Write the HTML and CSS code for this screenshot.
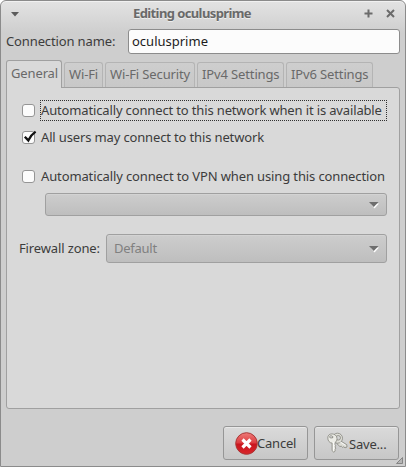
FILE: index.html
```html
<!DOCTYPE html>
<html lang="en">
<head>
<meta charset="utf-8">
<title>Editing oculusprime</title>
<link rel="stylesheet" href="styles.css">
</head>
<body>
<div class="window">
  <header class="titlebar">
    <svg class="menu-icon" width="8" height="5" viewBox="0 0 8 5"><path d="M0 0h8L4 4.5z" fill="#5c5c5c"/></svg>
    <h1 class="title">Editing oculusprime</h1>
    <div class="controls">
      <svg width="9" height="9" viewBox="0 0 9 9"><path d="M.5 4.5h8M4.5.5v8" stroke="#6b6b6b" stroke-width="2"/></svg>
      <svg width="9" height="9" viewBox="0 0 9 9"><path d="M1 1l7 7M8 1L1 8" stroke="#6b6b6b" stroke-width="2"/></svg>
    </div>
  </header>
  <div class="name-row">
    <label class="name-label" for="name">Connection name:</label>
    <input class="name-input" id="name" value="oculusprime">
  </div>
  <nav class="tabs">
    <div class="tab active">General</div>
    <div class="tab wifi">Wi-Fi</div>
    <div class="tab security">Wi-Fi Security</div>
    <div class="tab ip">IPv4 Settings</div>
    <div class="tab ip">IPv6 Settings</div>
  </nav>
  <main class="panel">
    <div class="check-row first"><span class="box"></span><span class="check-label focused">Automatically connect to this network when it is available</span></div>
    <div class="check-row second"><span class="box"><svg class="tick" width="14" height="13" viewBox="0 0 14 13"><path d="M1.8 6.8L5.3 10.4Q7.8 5 12.6 1.6" fill="none" stroke="#111" stroke-width="2.3"/></svg></span><span class="check-label users">All users may connect to this network</span></div>
    <div class="check-row third"><span class="box"></span><span class="check-label vpn">Automatically connect to VPN when using this connection</span></div>
    <div class="combo vpn-combo"><span></span><svg width="10" height="7" viewBox="0 0 10 7"><path d="M1.500 1.500H10L5.500 6.500z" fill="#fff"/><path d="M0 0h9.500L4.750 5z" fill="#6e6e6e"/></svg></div>
    <div class="zone-row">
      <span class="zone-label">Firewall zone:</span>
      <div class="combo zone-combo"><span class="zone-value">Default</span><svg width="10" height="7" viewBox="0 0 10 7"><path d="M1.500 1.500H10L5.500 6.500z" fill="#fff"/><path d="M0 0h9.500L4.750 5z" fill="#6e6e6e"/></svg></div>
    </div>
  </main>
  <footer class="actions">
    <button class="button cancel"><svg width="23" height="23" viewBox="0 0 23 23"><defs><linearGradient id="red" x2="0" y2="1"><stop stop-color="#ee7b78"/><stop offset=".48" stop-color="#dc3c40"/><stop offset=".52" stop-color="#c9151e"/><stop offset="1" stop-color="#d9262b"/></linearGradient></defs><circle cx="11.500" cy="11.500" r="10.800" fill="url(#red)" stroke="#a93737"/><path d="M7.500 7.500l8 8M15.500 7.500l-8 8" stroke="#fff" stroke-width="3.200"/></svg><span class="cancel-text">Cancel</span></button>
    <button class="button save"><svg width="22" height="22" viewBox="0 0 22 22"><g stroke="#85857d" stroke-width=".8" stroke-linejoin="round"><path d="M13 8.500l6.800 4.200.2 2.300-2 .8-1.300-1-1 .7-1.400-1.300-1.400.3-3-2.800z" fill="#dcdcd5"/><path fill-rule="evenodd" d="M10.500 1.200a5 5 0 1 1 0 10 5 5 0 0 1 0-10zm.7 2.300a2.300 2.300 0 1 0 0 4.600 2.300 2.300 0 0 0 0-4.600z" fill="#e0e0d9"/><path fill-rule="evenodd" d="M.8 6C.8 3.300 2.500 1.900 5 1.900s5 1.800 5 4.600c0 2-.7 3.200-2 4.100v2.200l.8 1-.8 1.100.8 1.200-.7 1.200v1.900L6.800 20.200l-1.700-1.500v-7.600C2.500 11 .8 8.700.8 6zm1.700-.8c.2 1 3 1 3.500.2S4.800 3.700 4 3.700s-1.600.7-1.500 1.500z" fill="#ecece6"/></g><path d="M6.600 10v8.500M13 9.800l5.500 3.500" stroke="#fff" stroke-width=".8"/></svg><span class="save-text">Save...</span></button>
  </footer>
  <svg class="grip" width="7" height="7" viewBox="0 0 7 7"><path d="M6.500.5v6H.5z" fill="#b5b5b5" stroke="#858585"/></svg>
</div>
</body>
</html>
```
FILE: styles.css
```css
* { box-sizing: border-box; }
body {
  margin: 0;
  width: 406px;
  height: 467px;
  overflow: hidden;
  background: #fff;
  font: 13px/18px "Noto Sans", "Open Sans", sans-serif;
  letter-spacing: -0.13px;
  color: #3c3c3c;
}
svg { display: block; flex: none; }
.window {
  position: relative;
  height: 467px;
  padding: 0 5px;
  border: 1px solid #8b8b8b;
  border-radius: 6px 6px 0 0;
  background: linear-gradient(#e3e3e3, #cecece 32px);
  box-shadow: inset 0 1px #f1f1f1;
}
.titlebar {
  height: 28px;
  padding: 0 5px;
  display: flex;
  align-items: center;
  justify-content: space-between;
}
.title {
  margin: -4px 0 0 1px;
  font-size: 13px;
  line-height: 18px;
  font-weight: 700;
  letter-spacing: -0.6px;
  color: #696969;
  text-shadow: 0 1px #eee;
  white-space: nowrap;
}
.menu-icon { margin-top: -2px; }
.controls { display: flex; gap: 13px; margin-top: -3px; }
.name-row { display: flex; align-items: center; height: 25px; }
.name-label { width: 122px; padding-bottom: 1px; white-space: nowrap; }
.name-input {
  width: 272px;
  height: 25px;
  padding: 0 3px 1px;
  border: 1px solid #8c8c8c;
  border-radius: 3px;
  background: #fcfcfc;
  font: inherit;
  letter-spacing: 0;
  color: #1c1c1c;
  outline: none;
}
.tabs { display: flex; align-items: flex-end; gap: 2px; height: 33px; }
.tab {
  height: 25px;
  padding: 2px 0 0 4px;
  border: 1px solid #b4b4b4;
  border-bottom: 0;
  border-radius: 3px 3px 0 0;
  background: linear-gradient(#cecece, #c8c8c8);
  color: #696969;
  white-space: nowrap;
}
.tab.active {
  position: relative;
  width: 56px;
  height: 28px;
  margin-bottom: -1px;
  padding-top: 3px;
  border-color: #a0a0a0;
  background: #d9d9d9;
}
.wifi { width: 39px; }
.security { width: 90px; }
.ip { width: 87px; }
.panel {
  height: 322px;
  padding: 12px 12px 0;
  border: 1px solid #a0a0a0;
  border-radius: 0 3px 3px 3px;
  background: #d9d9d9;
}
.check-row { display: flex; align-items: center; height: 21px; padding-left: 3px; letter-spacing: -0.145px; }
.check-row.second { margin-top: 6px; }
.check-row.third { margin-top: 18px; }
.check-row.third { letter-spacing: -0.125px; }
.box {
  width: 13px;
  height: 13px;
  flex: none;
  border: 1px solid #959595;
  border-radius: 3px;
  background: #fcfcfc;
}
.tick { margin: -2px 0 0 0; overflow: visible; }
.check-label { margin-left: 5px; height: 21px; padding: 1px 0 0 1px; white-space: nowrap; }
.focused { width: 347px; outline: 1px dotted #303030; outline-offset: -1px; }
.combo {
  display: flex;
  align-items: center;
  justify-content: space-between;
  padding: 0 7px;
  border: 1px solid #a0a0a0;
  border-radius: 3px;
  background: linear-gradient(#cdcdcd, #bebebe);
  box-shadow: inset 0 1px #d3d3d3;
}
.combo svg { margin-top: 2px; }
.vpn-combo { width: 342px; height: 23px; margin: 6px 0 0 26px; }
.zone-row { display: flex; align-items: center; margin-top: 18px; }
.zone-label { width: 87px; padding-bottom: 1px; white-space: nowrap; }
.zone-combo { width: 281px; height: 29px; }
.zone-value { padding-bottom: 1px; color: #808080; letter-spacing: -0.25px; }
.actions { display: flex; justify-content: flex-end; gap: 6px; padding: 17px 1px 0 0; }
.button {
  display: flex;
  align-items: center;
  width: 85px;
  height: 34px;
  padding: 0 0 0 11px;
  border: 1px solid #969696;
  border-radius: 3px;
  background: linear-gradient(#dadada, #c7c7c7);
  box-shadow: inset 0 1px #e8e8e8;
  font: inherit;
  letter-spacing: -0.2px;
  color: #3c3c3c;
}
.cancel-text { margin-left: -1px; }
.save { padding-left: 12px; }
.save-text { margin: 2px 0 0 0; }
.grip { position: absolute; right: 2px; bottom: 2px; }
```
